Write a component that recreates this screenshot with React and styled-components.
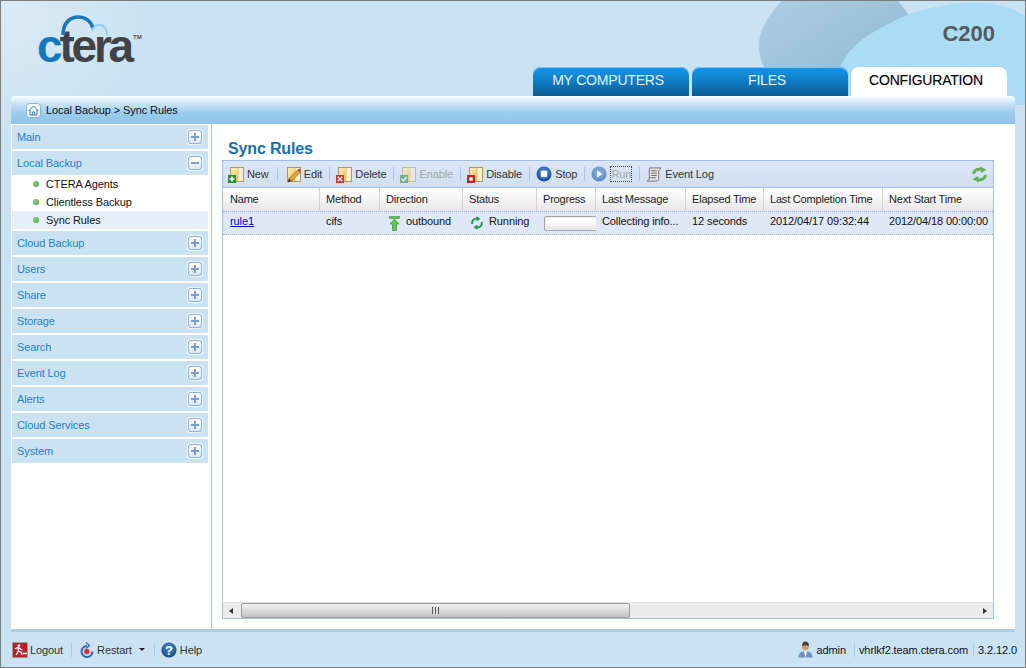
import React from "react";
import styled, { createGlobalStyle } from "styled-components";

const Global = createGlobalStyle`
  html, body { margin: 0; padding: 0; background: #cae2f1; }
  * { box-sizing: border-box; }
  body { font-family: "Liberation Sans", Arial, sans-serif; font-size: 11px; letter-spacing: -0.1px; }
`;

const Window = styled.div`
  position: relative;
  width: 1026px;
  height: 668px;
  overflow: hidden;
  border: 1px solid #7c7c7c;
  background: radial-gradient(circle at 0 0, #dcebf5 0, #cae2f1 150px);
  display: flex;
  flex-direction: column;
`;
const Blobs = styled.svg`
  position: absolute;
  top: -1px;
  right: -1px;
  width: 300px;
  height: 130px;
`;
const Header = styled.header`
  position: relative;
  height: 95px;
  padding-left: 37px;
  display: flex;
  justify-content: space-between;
  align-items: flex-start;
`;
const Logo = styled.div`
  position: relative;
  margin-top: 14px;
  width: 110px;
  height: 50px;
`;
const LogoArc = styled.svg`
  position: absolute;
  left: 0;
  top: 0;
  width: 110px;
  height: 50px;
`;
const LogoWord = styled.div`
  position: absolute;
  left: -1px;
  top: 6px;
  font-family: "Liberation Sans", sans-serif;
  font-weight: 700;
  font-size: 46px;
  line-height: 50px;
  letter-spacing: -3.2px;
  color: #3f4347;
  white-space: nowrap;
`;
const LogoC = styled.span`
  color: #1677bd;
`;
const LogoTm = styled.span`
  position: absolute;
  left: 96px;
  top: 13px;
  font-size: 6px;
  line-height: 6px;
  letter-spacing: 0;
  font-weight: 700;
  color: #555;
`;
const HeadRight = styled.div`
  position: relative;
  margin-right: 18px;
  display: flex;
  flex-direction: column;
  align-items: flex-end;
`;
const Model = styled.div`
  margin: 21px 12px 21px 0;
  font-size: 22px;
  line-height: 24px;
  font-weight: 700;
  letter-spacing: 0;
  color: #555a5e;
`;
const Tabs = styled.nav`
  display: flex;
  gap: 3px;
`;
const Tab = styled.div`
  width: 156px;
  height: 29px;
  padding: 0 6px 3px 0;
  display: flex;
  align-items: center;
  justify-content: center;
  border-radius: 8px 8px 0 0;
  font-size: 14px;
  letter-spacing: -0.2px;
  color: ${(p) => (p.$active ? "#000" : "#e4f1fa")};
  background: ${(p) => (p.$active ? "#fff" : "linear-gradient(#1596ec, #0f7cc4 50%, #0b5c92)")};
  box-shadow: ${(p) => (p.$active ? "none" : "inset 0 1px 0 #7cc4f2")};
  text-shadow: ${(p) => (p.$active ? "0 0 1px rgba(0,0,0,.25)" : "none")};
`;
const Shell = styled.div`
  position: relative;
  margin-left: 10px;
  width: 1004px;
`;
const Crumb = styled.div`
  height: 28px;
  padding-left: 15px;
  display: flex;
  align-items: center;
  gap: 5px;
  border-radius: 4px 4px 0 0;
  background: linear-gradient(#fff 0, #d2e7f7 22%, #9acbec 62%, #8fc4e9 100%);
  color: #111;
`;
const Body = styled.div`
  height: 505px;
  display: flex;
  background: #fff;
`;
const Side = styled.aside`
  width: 201px;
  padding: 1px 3px 0 1px;
  border-right: 1px solid #a9c9e3;
  flex: none;
`;
const SectionHead = styled.div`
  height: 24px;
  margin-bottom: ${(p) => (p.$open ? 0 : "2px")};
  padding: 0 6px 0 5px;
  display: flex;
  align-items: center;
  justify-content: space-between;
  background: #cae2f1;
  color: #2183c4;
`;
const Toggle = styled.span`
  position: relative;
  width: 14px;
  height: 14px;
  border: 1px solid #8fb3da;
  border-radius: 3px;
  background: linear-gradient(#fff, #dbe7f8);
  box-shadow: 0 0 0 1px #eef5fb;
  &::before {
    content: "";
    position: absolute;
    left: 2px;
    right: 2px;
    top: 5px;
    height: 2px;
    background: #7c9dc4;
  }
  &::after {
    content: "";
    display: ${(p) => (p.$open ? "none" : "block")};
    position: absolute;
    top: 2px;
    bottom: 2px;
    left: 5px;
    width: 2px;
    background: #7c9dc4;
  }
`;
const SubList = styled.div`
  margin-bottom: 1px;
  padding-bottom: 1px;
`;
const SubItem = styled.div`
  height: 18px;
  padding-left: 21px;
  display: flex;
  align-items: center;
  gap: 7px;
  color: #111;
  background: ${(p) => (p.$active ? "#e6eefa" : "transparent")};
`;
const Dot = styled.i`
  width: 6px;
  height: 6px;
  border-radius: 50%;
  background: radial-gradient(circle at 40% 40%, #86d07a, #4f9a55);
`;
const Content = styled.main`
  flex: 1;
  padding: 16px 21px 0 10px;
`;
const Title = styled.h1`
  margin: 0 0 2px 6px;
  font-size: 16px;
  line-height: 18px;
  font-weight: 700;
  letter-spacing: -0.15px;
  color: #186fae;
`;
const Panel = styled.section`
  height: 459px;
  display: flex;
  flex-direction: column;
  border: 1px solid #9dbfe8;
`;
const Toolbar = styled.div`
  height: 27px;
  padding: 0 5px;
  display: flex;
  align-items: center;
  flex: none;
  border-bottom: 1px solid #9dbfe8;
  background: linear-gradient(#dbe6f5, #d2dff0);
`;
const ToolBtn = styled.span`
  display: flex;
  align-items: center;
  gap: 3px;
  white-space: nowrap;
  color: ${(p) => (p.$off ? "#a3a8ae" : "#333")};
`;
const FocusLabel = styled.span`
  border: 1px dotted #444;
  padding: 1px 0;
  color: #a3a8ae;
`;
const ToolSep = styled.i`
  width: 1px;
  height: 14px;
  margin: 0 ${(p) => (p.$wide ? 7 : 6)}px 0 ${(p) => (p.$wide ? 8 : 7)}px;
  background: #a9c8ee;
`;
const ToolEnd = styled.span`
  margin-left: auto;
  display: flex;
`;
const HeadRow = styled.div`
  height: 23px;
  display: flex;
  flex: none;
  background: linear-gradient(#fff, #f4f4f4 50%, #e6e6e6);
`;
const HeadCell = styled.div`
  width: ${(p) => p.$w}px;
  padding: 0 0 2px ${(p) => (p.$first ? 7 : 6)}px;
  display: flex;
  align-items: center;
  color: #222;
  letter-spacing: -0.2px;
  white-space: nowrap;
  overflow: hidden;
  border-right: ${(p) => (p.$last ? "none" : "1px solid #d2d2d2")};
`;
const DataRow = styled.div`
  height: 24px;
  display: flex;
  flex: none;
  background: #dfe8f6;
  border-top: 1px dotted #9db2d0;
  border-bottom: 1px dotted #9db2d0;
`;
const Cell = styled.div`
  width: ${(p) => p.$w}px;
  padding: 0 0 5px ${(p) => (p.$first ? 7 : 6)}px;
  display: flex;
  align-items: center;
  gap: 6px;
  color: #111;
  white-space: nowrap;
  overflow: hidden;
`;
const CellIcon = styled.span`
  display: flex;
  flex: none;
  margin: 5px 0 0 ${(p) => p.$left}px;
`;
const RuleLink = styled.a`
  color: #0000d8;
  text-decoration: underline;
`;
const Progress = styled.div`
  margin: 5px 0 0 1px;
  width: 70px;
  height: 15px;
  flex: none;
  border: 1px solid #a5a5a5;
  border-radius: 2px;
  background: linear-gradient(#fff, #f7f7f7 60%, #dedede);
  box-shadow: inset 0 0 0 1px #eee;
`;
const Fill = styled.div`
  flex: 1;
`;
const Scrollbar = styled.div`
  height: 16px;
  display: flex;
  align-items: stretch;
  flex: none;
  background: #ececec;
  border-top: 1px solid #e2e2e2;
`;
const ArrowZone = styled.div`
  width: ${(p) => (p.$right ? "auto" : "18px")};
  flex: ${(p) => (p.$right ? 1 : "none")};
  padding: ${(p) => (p.$right ? "0 6px 0 0" : "0 0 0 6px")};
  display: flex;
  align-items: center;
  justify-content: ${(p) => (p.$right ? "flex-end" : "flex-start")};
`;
const Arrow = styled.i`
  width: 0;
  height: 0;
  border-top: 3.5px solid transparent;
  border-bottom: 3.5px solid transparent;
  border-right: ${(p) => (p.$right ? "none" : "4px solid #333")};
  border-left: ${(p) => (p.$right ? "4px solid #333" : "none")};
`;
const Thumb = styled.div`
  width: 389px;
  display: flex;
  align-items: center;
  justify-content: center;
  border: 1px solid #9a9a9a;
  border-radius: 2px;
  background: linear-gradient(#f4f4f4, #dcdcdc 45%, #c2c2c2);
`;
const Grip = styled.i`
  width: 7px;
  height: 7px;
  background: repeating-linear-gradient(90deg, #555 0 1px, #ddd 1px 3px);
`;
const Band = styled.div`
  height: 3px;
  background: #aecde3;
`;
const Footer = styled.footer`
  flex: 1;
  padding: 0 8px 0 11px;
  display: flex;
  align-items: center;
  justify-content: space-between;
  position: relative;
`;
const FootGroup = styled.div`
  display: flex;
  align-items: center;
`;
const FootItem = styled.span`
  display: flex;
  align-items: center;
  gap: ${(p) => p.$gap || 3}px;
  color: ${(p) => p.$color || "#333"};
  white-space: nowrap;
`;
const FootSep = styled.i`
  width: 1px;
  height: 14px;
  margin: 0 ${(p) => p.$r ?? 7}px 0 ${(p) => p.$l ?? 8}px;
  background: #a3cbee;
`;
const Caret = styled.i`
  margin-left: 4px;
  width: 0;
  height: 0;
  border-left: 3px solid transparent;
  border-right: 3px solid transparent;
  border-top: 3px solid #222;
`;

const Folder = ({ badge, faded, id }) => (
  <svg width="16" height="17" viewBox="0 0 16 17" style={faded ? { opacity: 0.55 } : undefined}>
    <defs>
      <linearGradient id={`f${id}`} x1="0" x2="1" y1="0" y2="1">
        <stop offset="0" stopColor="#fff2b8" />
        <stop offset="1" stopColor="#e7b64c" />
      </linearGradient>
    </defs>
    <rect x="2.500" y="1.500" width="13" height="14" fill="#f6efd6" stroke="#b3975a" />
    <path d="M3 2h8l-1 13H3z" fill={`url(#f${id})`} />
    {badge === "plus" && (
      <g>
        <rect x="0" y="9" width="8" height="8" fill="#2f8a3c" />
        <path d="M4 10.500v5M1.500 13h5" stroke="#fff" strokeWidth="1.600" />
      </g>
    )}
    {badge === "x" && (
      <g>
        <rect x="0" y="9" width="8" height="8" fill="#cf2f34" />
        <path d="M1.700 10.700l4.600 4.600M6.300 10.700l-4.600 4.600" stroke="#fff" strokeWidth="1.400" />
      </g>
    )}
    {badge === "check" && (
      <g>
        <rect x="0" y="9" width="8" height="8" fill="#2f8a3c" />
        <path d="M1.500 13l2 2 3-4" stroke="#fff" strokeWidth="1.400" fill="none" />
      </g>
    )}
    {badge === "stop" && (
      <g>
        <rect x="0" y="9" width="8" height="8" fill="#c91f26" />
        <rect x="2.300" y="11.300" width="3.400" height="3.400" fill="#fff" />
      </g>
    )}
    {badge === "pen" && (
      <g>
        <path d="M3 16l1-3.500 8.500-8.500 2.500 2.500-8.500 8.500z" fill="#e9a32f" stroke="#7a5a20" strokeWidth=".6" />
        <path d="M12.500 4l1.500-1.500 1.500 1.500L15 6.500z" fill="#d6312f" />
        <path d="M3 16l1-3.500 2.500 2.500z" fill="#333" />
      </g>
    )}
  </svg>
);

const RoundBtn = ({ faded, play, id }) => (
  <svg width="16" height="16" viewBox="0 0 16 16" style={faded ? { opacity: 0.6 } : undefined}>
    <defs>
      <radialGradient id={`r${id}`} cx=".5" cy=".4" r=".6">
        <stop offset="0" stopColor="#5f9be8" />
        <stop offset="1" stopColor="#11489c" />
      </radialGradient>
    </defs>
    <circle cx="8" cy="8" r="7.500" fill={`url(#r${id})`} />
    {play ? <path d="M6 4.500l5.500 3.500-5.500 3.500z" fill="#fff" /> : <rect x="4.800" y="4.800" width="6.400" height="6.400" rx="1" fill="#fff" />}
  </svg>
);

const EventLogIcon = () => (
  <svg width="16" height="17" viewBox="0 0 17 17">
    <path d="M4 1.500h12c-1 1-2 2-2.500 3v8c0 1.500-.5 2.500-1.500 3H1c1-.5 2.500-1.500 2.500-3v-9c0-.8 0-1.500.5-2z" fill="#e4e4e4" stroke="#6f6f6f" />
    <path d="M5.500 4.500h6M5.500 7h6M5.500 9.500h6M4.500 12h6" stroke="#666" />
  </svg>
);

const RefreshIcon = () => (
  <svg width="17" height="17" viewBox="0 0 17 17" fill="none">
    <path d="M2.500 8c.5-3.500 4-5.500 7.500-4.500" stroke="#62b050" strokeWidth="3" />
    <path d="M9 .5l6.500 3.200L10 7z" fill="#62b050" />
    <path d="M14.500 9c-.5 3.500-4 5.500-7.500 4.500" stroke="#62b050" strokeWidth="3" />
    <path d="M8 16.500l-6.500-3.200L7 10z" fill="#62b050" />
  </svg>
);

const RunningIcon = () => (
  <svg width="12" height="14" viewBox="0 0 12 14" fill="none">
    <path d="M1.300 8C.6 5 2.500 2.500 6 2.500" stroke="#1f9c5c" strokeWidth="2" />
    <path d="M5.500 0l4 2.700-4 2.700z" fill="#1f9c5c" />
    <path d="M10.700 6c.7 3-1.200 5.500-4.700 5.500" stroke="#1f9c5c" strokeWidth="2" />
    <path d="M6.500 14l-4-2.700 4-2.700z" fill="#1f9c5c" />
  </svg>
);

const OutboundIcon = () => (
  <svg width="11" height="15" viewBox="0 0 11 15">
    <rect x=".5" y=".5" width="10" height="2" fill="#5cc04e" stroke="#3f9a3a" strokeWidth=".6" />
    <path d="M5.500 3L10 8H7.500v6.500h-4V8H1z" fill="#62c655" stroke="#3a9538" strokeWidth=".7" />
  </svg>
);

const HomeIcon = () => (
  <svg width="15" height="15" viewBox="0 0 15 15" fill="none">
    <rect x=".5" y=".5" width="14" height="14" rx="3" fill="#f4f9fd" stroke="#8fb3d4" />
    <path d="M2.500 8L7.500 3l5 5M4 7v5h7V7M6.300 12V9h2.400v3" stroke="#3c78b2" />
  </svg>
);

const LogoutIcon = () => (
  <svg width="16" height="16" viewBox="0 0 16 16" fill="none">
    <rect x=".5" y=".5" width="15" height="15" rx="1" fill="#b92025" stroke="#9b9b9b" />
    <circle cx="7" cy="3.500" r="1.300" fill="#fff" />
    <path d="M3 7l3-2 2.500 2 2 1M6 5l.5 4L4 13M6.500 9l3 1.500V13M10.500 11.500H15" stroke="#fff" strokeWidth="1.300" />
  </svg>
);

const RestartIcon = () => (
  <svg width="15" height="16" viewBox="0 0 15 16" fill="none">
    <path d="M8 4a5.500 5.500 0 1 0 5.500 5.500" stroke="#2f68ad" strokeWidth="2" />
    <path d="M7 .5L10.500 3.500 7 6.500" stroke="#2f68ad" strokeWidth="1.200" />
    <circle cx="7.800" cy="9.500" r="2.700" fill="#e02d34" />
  </svg>
);

const HelpIcon = () => (
  <svg width="16" height="16" viewBox="0 0 16 16">
    <defs>
      <radialGradient id="help" cx=".5" cy=".35" r=".7">
        <stop offset="0" stopColor="#4d93cf" />
        <stop offset="1" stopColor="#103f70" />
      </radialGradient>
    </defs>
    <circle cx="8" cy="8" r="7.600" fill="url(#help)" />
    <text x="8" y="12.500" textAnchor="middle" fontSize="13" fontWeight="700" fontFamily="Liberation Sans" fill="#fff">?</text>
  </svg>
);

const AdminIcon = () => (
  <svg width="15" height="17" viewBox="0 0 15 17">
    <path d="M.5 16.500c0-4 2-5.500 4.500-6h5c2.500.5 4.500 2 4.500 6z" fill="#6f92c6" />
    <path d="M6 10.500h3l-1.500 6z" fill="#fff" />
    <circle cx="7.500" cy="5.500" r="3.500" fill="#c99b76" />
    <path d="M4 5c0-3 1.500-4.500 3.500-4.500S11 2 11 5C9 4 6 4 4 5z" fill="#4a3c33" />
  </svg>
);

const columns = [
  ["Name", 97],
  ["Method", 60],
  ["Direction", 83],
  ["Status", 74],
  ["Progress", 59],
  ["Last Message", 90],
  ["Elapsed Time", 78],
  ["Last Completion Time", 119],
  ["Next Start Time", 110],
];
const sections = ["Cloud Backup", "Users", "Share", "Storage", "Search", "Event Log", "Alerts", "Cloud Services", "System"];

const Section = ({ label, open }) => (
  <SectionHead $open={open}>
    {label}
    <Toggle $open={open} />
  </SectionHead>
);

export default function App() {
  return (
    <>
      <Global />
      <Window>
        <Blobs viewBox="726 0 300 130">
          <defs>
            <linearGradient id="darkBlob" x1="0" y1="0" x2="1" y2="1">
              <stop offset="0" stopColor="#abcee5" />
              <stop offset="1" stopColor="#8db6d0" />
            </linearGradient>
          </defs>
          <path d="M783 0C765 18 755 38 760 55c5 30 40 41 90 41l50-36c15-20 20-35-3-60z" fill="url(#darkBlob)" />
          <path d="M837 96c-2-36 13-56 70-81C950 0 1000-3 1026 17v88H837z" fill="#aadcf6" />
        </Blobs>
        <Header>
          <Logo>
            <LogoWord>
              <LogoC>c</LogoC>tera
              <LogoTm>TM</LogoTm>
            </LogoWord>
            <LogoArc viewBox="38 15 110 50" fill="none">
              <path d="M63 35C63 22 71 17 78 17c7 0 13 4 15 11" stroke="#1677bd" strokeWidth="3.600" />
              <path d="M92 31c1-4 4-6 8-6 4 0 7 4 7 10" stroke="#8ccdf0" strokeWidth="2" />
            </LogoArc>
          </Logo>
          <HeadRight>
            <Model>C200</Model>
            <Tabs>
              <Tab>MY COMPUTERS</Tab>
              <Tab>FILES</Tab>
              <Tab $active>CONFIGURATION</Tab>
            </Tabs>
          </HeadRight>
        </Header>
        <Shell>
          <Crumb>
            <HomeIcon />
            Local Backup &gt; Sync Rules
          </Crumb>
          <Body>
            <Side>
              <Section label="Main" />
              <Section label="Local Backup" open />
              <SubList>
                <SubItem><Dot />CTERA Agents</SubItem>
                <SubItem><Dot />Clientless Backup</SubItem>
                <SubItem $active><Dot />Sync Rules</SubItem>
              </SubList>
              {sections.map((s) => (
                <Section key={s} label={s} />
              ))}
            </Side>
            <Content>
              <Title>Sync Rules</Title>
              <Panel>
                <Toolbar>
                  <ToolBtn><Folder id="new" badge="plus" />New</ToolBtn>
                  <ToolSep $wide />
                  <ToolBtn><Folder id="edit" badge="pen" />Edit</ToolBtn>
                  <ToolSep />
                  <ToolBtn><Folder id="del" badge="x" />Delete</ToolBtn>
                  <ToolSep />
                  <ToolBtn $off><Folder id="en" badge="check" faded />Enable</ToolBtn>
                  <ToolSep />
                  <ToolBtn><Folder id="dis" badge="stop" />Disable</ToolBtn>
                  <ToolSep />
                  <ToolBtn><RoundBtn id="stop" />Stop</ToolBtn>
                  <ToolSep />
                  <ToolBtn $off><RoundBtn id="run" play faded /><FocusLabel>Run</FocusLabel></ToolBtn>
                  <ToolSep />
                  <ToolBtn><EventLogIcon />Event Log</ToolBtn>
                  <ToolEnd><RefreshIcon /></ToolEnd>
                </Toolbar>
                <HeadRow>
                  {columns.map(([label, w], i) => (
                    <HeadCell key={label} $w={w} $first={i === 0} $last={i === columns.length - 1}>{label}</HeadCell>
                  ))}
                </HeadRow>
                <DataRow>
                  <Cell $w={97} $first><RuleLink>rule1</RuleLink></Cell>
                  <Cell $w={60}>cifs</Cell>
                  <Cell $w={83}><CellIcon $left={3}><OutboundIcon /></CellIcon>outbound</Cell>
                  <Cell $w={74}><CellIcon $left={2}><RunningIcon /></CellIcon>Running</Cell>
                  <Cell $w={59}><Progress /></Cell>
                  <Cell $w={90}>Collecting info...</Cell>
                  <Cell $w={78}>12 seconds</Cell>
                  <Cell $w={119}>2012/04/17 09:32:44</Cell>
                  <Cell $w={110}>2012/04/18 00:00:00</Cell>
                </DataRow>
                <Fill />
                <Scrollbar>
                  <ArrowZone><Arrow /></ArrowZone>
                  <Thumb><Grip /></Thumb>
                  <ArrowZone $right><Arrow $right /></ArrowZone>
                </Scrollbar>
              </Panel>
            </Content>
          </Body>
          <Band />
        </Shell>
        <Footer>
          <FootGroup>
            <FootItem $gap={2}><LogoutIcon />Logout</FootItem>
            <FootSep />
            <FootItem><RestartIcon />Restart<Caret /></FootItem>
            <FootSep $l={9} $r={6} />
            <FootItem><HelpIcon />Help</FootItem>
          </FootGroup>
          <FootGroup>
            <FootItem $gap={4} $color="#111"><AdminIcon />admin</FootItem>
            <FootSep $l={8} $r={4} />
            <FootItem $color="#111">vhrlkf2.team.ctera.com</FootItem>
            <FootSep $l={5} $r={4} />
            <FootItem $color="#111">3.2.12.0</FootItem>
          </FootGroup>
        </Footer>
      </Window>
    </>
  );
}
